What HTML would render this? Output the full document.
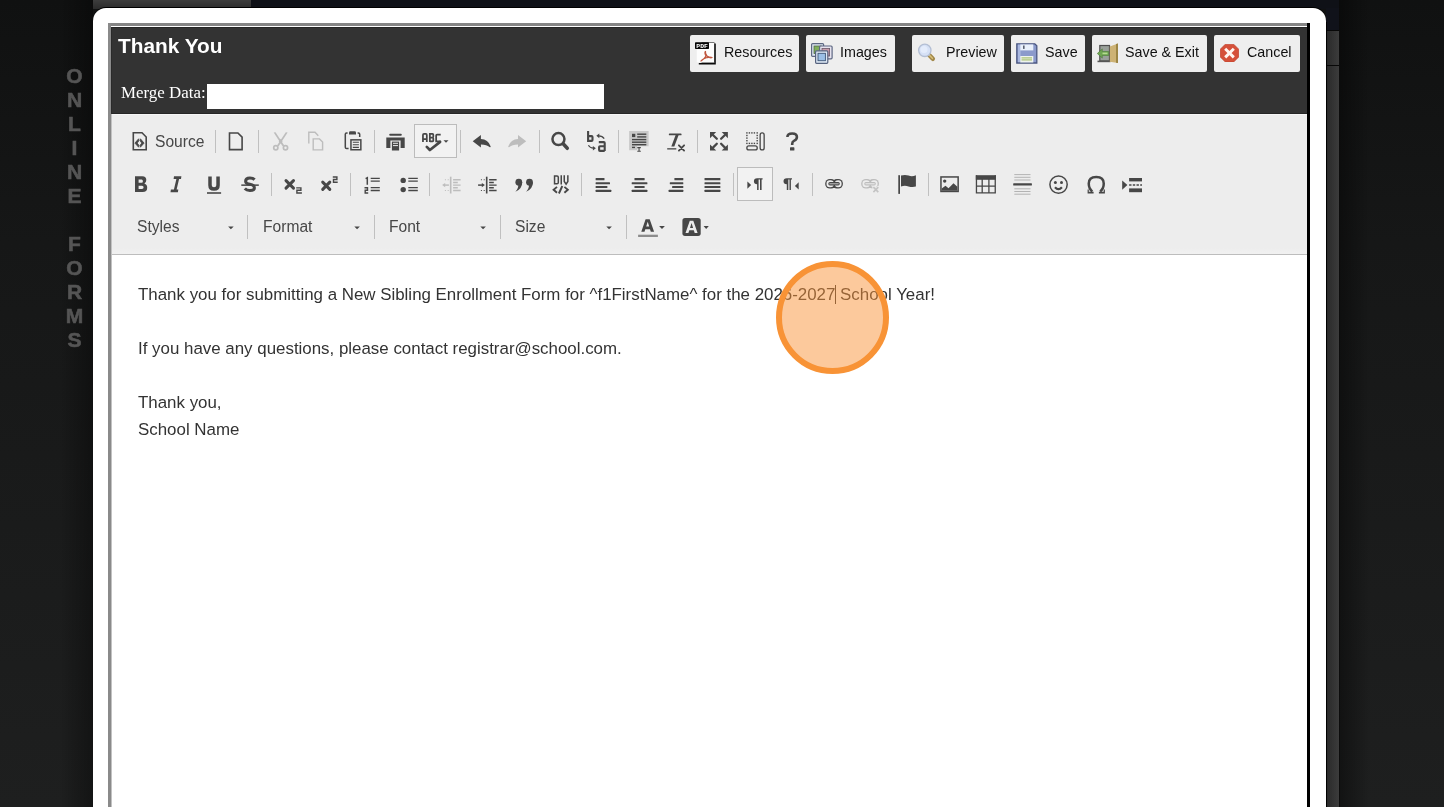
<!DOCTYPE html>
<html><head><meta charset="utf-8">
<style>
*{box-sizing:border-box}
html,body{margin:0;padding:0}
body{width:1444px;height:807px;overflow:hidden;position:relative;background:linear-gradient(180deg,#101111 0%,#161717 30%,#1e1f1f 100%);font-family:"Liberation Sans",sans-serif}
.abs{position:absolute}
#title,#merge,#body,#side,.lbl,.hb span,svg{will-change:transform}
#side{position:absolute;left:53.5px;top:63.5px;width:41px;text-align:center;color:#555;font:bold 21px/24px "Liberation Sans",sans-serif;-webkit-text-stroke:0.6px #555}
#topgray{left:93px;top:0;width:158px;height:9px;background:linear-gradient(180deg,#3d3d3d,#2b2b2b)}
#topnavy{left:251px;top:0;width:1088px;height:9px;background:#0f1117}
#rnavy{left:1326px;top:8px;width:13px;height:22px;background:#10121a}
#rstrip{left:1327px;top:30px;width:12px;height:777px;background:linear-gradient(90deg,#2a2a2a,#3c3c3c)}
#rline{left:1326px;top:22px;width:1px;height:785px;background:#000}
#lshade{left:60px;top:0;width:33px;height:807px;background:linear-gradient(90deg,rgba(0,0,0,0),rgba(0,0,0,0.35))}
#rshade{left:1339px;top:0;width:30px;height:807px;background:linear-gradient(90deg,rgba(0,0,0,0.4),rgba(0,0,0,0))}
#rh1{left:1327px;top:30px;width:12px;height:1.2px;background:#080808}
#rh2{left:1327px;top:64.5px;width:12px;height:1.3px;background:#080808}
#rblk{left:1338.5px;top:30px;width:1px;height:777px;background:#0c0c0c}
#modal{left:93px;top:8px;width:1233px;height:820px;background:#fff;border-radius:13px;box-shadow:0 -1px 0 #000}
#fl{left:107.7px;top:23px;width:3.3px;height:784px;background:#8a8a8a}
#fll{left:111px;top:114px;width:0.8px;height:693px;background:#c2c2c2}
#fdl{left:111px;top:27px;width:1px;height:87px;background:#2a2a2a}
#fdt{left:111px;top:27px;width:1196px;height:1px;background:#252525}
#ft{left:108px;top:23px;width:1202px;height:2.6px;background:#858585}
#fw{left:111px;top:25.6px;width:1196px;height:1.4px;background:#fff}
#fr{left:1307px;top:23px;width:3px;height:784px;background:#000}
#hdr{left:111px;top:27px;width:1196px;height:87px;background:#333}
#hdrline{left:111px;top:112.5px;width:1196px;height:1px;background:#262626}
#title{left:118px;top:31.8px;color:#fff;font:bold 20.8px/28px "Liberation Sans",sans-serif;white-space:nowrap}
#merge{left:121px;top:81px;color:#fff;font:16.9px/24px "Liberation Serif",serif;white-space:nowrap}
#mergein{left:207px;top:84px;width:397px;height:25px;background:#fff}
.hb{position:absolute;top:35px;height:37px;background:#eee;border-radius:2px;color:#111;font:14.3px/37px "Liberation Sans",sans-serif;white-space:nowrap}
.hb span{position:absolute;top:0}
.hb svg{position:absolute}
#tb{left:111px;top:113.5px;width:1196px;height:141px;background:#ededed;border-top:1px solid #f6f6f6}
#tbb{left:111px;top:254px;width:1196px;height:1px;background:#bdbdbd}
#tbg{left:111px;top:247.5px;width:1196px;height:6.5px;background:linear-gradient(180deg,#ededed,#f1f1f1)}
#ed{left:111px;top:255px;width:1196px;height:560px;background:#fff}
.sep{position:absolute;width:1px;background:#c0c0c0}
.lbl{position:absolute;color:#474747;font:15.6px/20px "Liberation Sans",sans-serif;white-space:nowrap}
.ic{position:absolute;overflow:visible}
.onbtn{position:absolute;background:#f2f2f2;border:1px solid #bcbcbc}
.arr{position:absolute;width:0;height:0;border-left:3px solid transparent;border-right:3px solid transparent;border-top:3px solid #474747}
#body{position:absolute;left:138px;top:281px;color:#333;font:16.9px/27.04px "Liberation Sans",sans-serif;white-space:nowrap}
#body p{margin:0}
#caret{left:835px;top:285px;width:1px;height:19px;background:#333}
#circ{left:776px;top:261px;width:113px;height:113px;border-radius:50%;border:6px solid #f89336;background:rgba(250,148,58,0.5)}
</style></head><body>
<div class="abs" id="lshade"></div><div class="abs" id="rshade"></div>
<div id="side">O<br>N<br>L<br>I<br>N<br>E<br><br>F<br>O<br>R<br>M<br>S</div>
<div class="abs" id="topgray"></div>
<div class="abs" id="topnavy"></div>
<div class="abs" id="rnavy"></div>
<div class="abs" id="rstrip"></div><div class="abs" id="rblk"></div><div class="abs" id="rh1"></div><div class="abs" id="rh2"></div>
<div class="abs" id="modal"></div>
<div class="abs" id="rline"></div>
<div class="abs" id="ft"></div>
<div class="abs" id="fl"></div>
<div class="abs" id="fw"></div>
<div class="abs" id="fr"></div>
<div class="abs" id="hdr"></div>
<div class="abs" id="hdrline"></div><div class="abs" id="fdt"></div><div class="abs" id="fdl"></div>
<div class="abs" id="title">Thank You</div>
<div class="abs" id="merge">Merge Data:</div>
<div class="abs" id="mergein"></div>
<!--HB-->
<div class="hb" style="left:690px;width:109px"><svg style="left:5px;top:7px" width="22" height="23" viewBox="0 0 22 23">
<path d="M6.5 0.5h13v20h-13z" fill="#000"/>
<path d="M1.8 1h17.5v19.3h-17.5z" fill="#fdfdfd"/>
<path d="M19.3 1.5h1.5v21h-17v-1.4h15.5z" fill="#0a0a0a"/>
<rect x="0" y="0.3" width="14" height="6.7" rx="0.7" fill="#050505"/>
<text x="1.3" y="5.6" font-family="Liberation Mono" font-weight="bold" font-size="6.2" fill="#fff" textLength="11.5" lengthAdjust="spacingAndGlyphs">PDF</text>
<path d="M10.5 9.5c-1 0.5 -0.5 2.5 0.5 4.5c-1 2 -3 4 -5 5c1 -1.5 3 -2.5 6 -3.5c2 -0.5 4 -0.5 5 0c-1 0.5 -3 0 -5 -1.5c-1 -1.5 -2 -3.5 -1.5 -4.5z" fill="none" stroke="#c0573f" stroke-width="1.3" stroke-linejoin="round"/>
</svg><span style="left:34px;top:-0.8px">Resources</span></div>
<div class="hb" style="left:806px;width:88.5px"><svg style="left:5px;top:8px" width="22" height="21" viewBox="0 0 22 21">
<rect x="0.6" y="0.6" width="12" height="12.8" rx="1" fill="#dfe7f0" stroke="#5d6782" stroke-width="1.2"/>
<rect x="3" y="3" width="7.2" height="7.5" fill="#7fae5a" stroke="#4f6a48" stroke-width="0.8"/>
<rect x="8.6" y="3" width="12.5" height="12.8" rx="1" fill="#e6e3ee" stroke="#5d6782" stroke-width="1.2"/>
<rect x="11" y="5.4" width="7.6" height="7.6" fill="#c89aaa" stroke="#6a5868" stroke-width="0.8"/>
<rect x="4.6" y="7.8" width="12.2" height="12.5" rx="1" fill="#dde8f5" stroke="#56627e" stroke-width="1.2"/>
<rect x="7" y="10.3" width="7.4" height="7.4" fill="#9bbfe6" stroke="#3f5676" stroke-width="0.9"/>
</svg><span style="left:34px;top:-0.8px">Images</span></div>
<div class="hb" style="left:912px;width:92px"><svg style="left:5px;top:8px" width="20" height="19" viewBox="0 0 20 19">
<path d="M12.2 12l3.6 3.8" stroke="#a08646" stroke-width="4.4" stroke-linecap="round"/>
<path d="M12.6 12.4l2.8 2.9" stroke="#d6be78" stroke-width="1.6" stroke-linecap="round"/>
<circle cx="7.8" cy="7.3" r="6.2" fill="#d6e1f6" stroke="#b4bfd4" stroke-width="1.3"/>
<circle cx="7" cy="6.5" r="3.5" fill="#e4ecfb"/>
</svg><span style="left:33.5px;top:-0.8px">Preview</span></div>
<div class="hb" style="left:1011px;width:74px"><svg style="left:5px;top:8px" width="22" height="21" viewBox="0 0 22 21">
<path d="M0.8 0.8h18l2 2v17.2h-20z" fill="#8b9acb" stroke="#4b5781" stroke-width="1.3"/>
<rect x="2" y="1.6" width="2.6" height="17.6" fill="#aab8e0"/>
<rect x="4.3" y="1.4" width="13" height="6" fill="#e9f0fb"/>
<rect x="7" y="2.5" width="1.6" height="3.4" fill="#5a6070"/>
<rect x="4.3" y="13" width="13" height="6.5" fill="#eef3ee"/>
<rect x="5.5" y="14.3" width="10.5" height="1.2" fill="#a7c070"/>
<rect x="5.5" y="16.3" width="10.5" height="1.2" fill="#a7c070"/>
</svg><span style="left:33.7px;top:-0.8px">Save</span></div>
<div class="hb" style="left:1092px;width:115px"><svg style="left:5px;top:8px" width="22" height="21" viewBox="0 0 22 21">
<rect x="2.8" y="2.5" width="9.7" height="15.5" fill="#9aa09a" stroke="#4e4e4e" stroke-width="1.2"/>
<rect x="0.5" y="17.6" width="13" height="1.6" fill="#555"/>
<path d="M12.8 3.4l8.2-3v19.6l-8.2 -1.2z" fill="#cdb274"/>
<path d="M19 1l2 -0.6v19.6l-2-0.3z" fill="#9c8544"/>
<path d="M0.3 10.5l5-4.6v2.6h6.4v4h-6.4v2.6z" fill="#6fa552" stroke="#4c7d38" stroke-width="0.6"/>
<path d="M5.5 9.6h5v1.6h-5z" fill="#b3dc8e"/>
</svg><span style="left:33.3px;top:-0.8px">Save &amp; Exit</span></div>
<div class="hb" style="left:1214px;width:86px"><svg style="left:6px;top:9px" width="19" height="18" viewBox="0 0 19 18">
<path d="M5.3 0.2h8.4l5.1 5.1v7.6l-5.1 5.1h-8.4l-5.1-5.1v-7.6z" fill="#d5503a" stroke="#b83e2a" stroke-width="0.6"/>
<path d="M5.2 4.8l8.6 8.6M13.8 4.8l-8.6 8.6" stroke="#fff4f0" stroke-width="2.9"/>
</svg><span style="left:33.3px;top:-0.8px">Cancel</span></div>
<!--/HB-->
<div class="abs" id="tb"></div>
<div class="abs" id="tbg"></div><div class="abs" id="tbb"></div>
<div class="abs" id="ed"></div><div class="abs" id="fll"></div>
<!--TB-->
<div class="sep" style="left:215.0px;top:130px;height:23px"></div>
<div class="sep" style="left:258.0px;top:130px;height:23px"></div>
<div class="sep" style="left:373.5px;top:130px;height:23px"></div>
<div class="sep" style="left:460.0px;top:130px;height:23px"></div>
<div class="sep" style="left:538.5px;top:130px;height:23px"></div>
<div class="sep" style="left:618.0px;top:130px;height:23px"></div>
<div class="sep" style="left:697.0px;top:130px;height:23px"></div>
<div class="sep" style="left:270.8px;top:172.5px;height:23.3px"></div>
<div class="sep" style="left:349.9px;top:172.5px;height:23.3px"></div>
<div class="sep" style="left:429.1px;top:172.5px;height:23.3px"></div>
<div class="sep" style="left:581.0px;top:172.5px;height:23.3px"></div>
<div class="sep" style="left:732.8px;top:172.5px;height:23.3px"></div>
<div class="sep" style="left:812.1px;top:172.5px;height:23.3px"></div>
<div class="sep" style="left:927.9px;top:172.5px;height:23.3px"></div>
<div class="sep" style="left:246.9px;top:215.3px;height:23.4px"></div>
<div class="sep" style="left:374.1px;top:215.3px;height:23.4px"></div>
<div class="sep" style="left:500.4px;top:215.3px;height:23.4px"></div>
<div class="sep" style="left:625.9px;top:215.3px;height:23.4px"></div>
<div class="onbtn" style="left:414px;top:124px;width:43px;height:34px"></div>
<div class="onbtn" style="left:737px;top:167.3px;width:36px;height:33.3px"></div>
<div class="lbl" style="left:155px;top:131.5px">Source</div>
<div class="lbl" style="left:136.8px;top:217.3px">Styles</div>
<div class="lbl" style="left:262.8px;top:217.3px">Format</div>
<div class="lbl" style="left:388.8px;top:217.3px">Font</div>
<div class="lbl" style="left:514.8px;top:217.3px">Size</div>
<svg class="abs" style="left:0;top:0" width="1444" height="807" viewBox="0 0 1444 807"><path d="M133.3 132.8H142L146.2 137V149.79999999999998H133.3Z" fill="none" stroke="#474747" stroke-width="1.6" stroke-linejoin="miter"/><path d="M138.6 138.8L134.9 143.1L138.6 147.2L138.9 145.3L137.2 143.1L138.9 140.8Z" fill="#474747" stroke="#474747" stroke-width="0.8" stroke-linejoin="round"/><path d="M140.4 138.8L144.1 143.1L140.4 147.2L140.1 145.3L141.8 143.1L140.1 140.8Z" fill="#474747" stroke="#474747" stroke-width="0.8" stroke-linejoin="round"/><path d="M229.5 133.0H237.9L242.1 137.2V149.6H229.5Z" fill="none" stroke="#474747" stroke-width="1.6" stroke-linejoin="miter"/><g fill="#bdbdbd"><path d="M273.7 132.6L275.5 132.3L284.3 145.4L282.6 146.3Z"/><path d="M287.6 132.6L285.8 132.3L277 145.4L278.7 146.3Z"/><path d="M280.65 138.8L282.6 141.4L280.65 143.8L278.7 141.4Z"/></g><g fill="none" stroke="#bdbdbd"><circle cx="275.8" cy="147.8" r="2.1" stroke-width="1.7"/><circle cx="285.5" cy="147.8" r="2.1" stroke-width="1.7"/></g><path d="M308.8 143.6V132.2H315L318.3 135.8" fill="none" stroke="#bdbdbd" stroke-width="1.4"/><path d="M313.2 138.89999999999998H319.5L322.6 142.0V149.9H313.2Z" fill="none" stroke="#bdbdbd" stroke-width="1.4" stroke-linejoin="miter"/><path d="M347.6 132.9H346.6Q345.3 132.9 345.3 134.2V147.2Q345.3 148.5 346.6 148.5H348.6" fill="none" stroke="#474747" stroke-width="1.5"/><path d="M357.6 132.9H358.4Q359.7 132.9 359.7 134.2V137" fill="none" stroke="#474747" stroke-width="1.5"/><path d="M349 134.6V132.6Q349 131.2 350.4 131.2H354.6Q356 131.2 356 132.6V134.6Z" fill="#474747"/><rect x="350.95" y="139.85" width="9.9" height="9.9" fill="none" stroke="#474747" stroke-width="1.5"/><path d="M352.8 142.2H358.9M352.8 144.8H358.9M352.8 147.4H358.9" stroke="#474747" stroke-width="1.1"/><rect x="389.2" y="133.8" width="12.6" height="2" rx="1" fill="#474747"/><path d="M386.3 137.5H404.7V147.9H400.6V140.5H390.4V147.9H386.3Z" fill="#474747"/><path d="M391.9 141.6H399.1V150.5H391.9Z" fill="#474747"/><path d="M393 143.3H398M393 145.6H398" stroke="#ebebeb" stroke-width="1"/><g fill="none" stroke="#474747" stroke-width="1.75"><path d="M422.95 142V135Q422.95 133.9 424 133.9H425.9Q426.8 133.9 426.8 135V142M422.95 139H426.8"/><path d="M429.85 142V133.9H432.6Q433.3 133.9 433.3 134.8V136.6Q433.3 137.5 432.6 137.5H429.85M432.6 137.5Q433.3 137.5 433.3 138.4V140.4Q433.3 141.25 432.6 141.25H429.85"/><path d="M440.7 134.65H437Q436.15 134.65 436.15 135.5V141.25H440.7"/></g><path d="M426.8 146.9L429.9 150L440.1 141.9" fill="none" stroke="#474747" stroke-width="2.7" stroke-linecap="round" stroke-linejoin="round"/><path d="M443.5 140.3H448.5L446 142.8Z" fill="#474747"/><path d="M472.7 141.3L480.9 134.9V139Q488 139 490.7 146.5Q490.6 147.7 489.5 147.1Q486.6 144.3 480.9 144.4V147.6Z" fill="#474747"/><g transform="translate(998.9000000000001,0) scale(-1,1)"><path d="M472.7 141.3L480.9 134.9V139Q488 139 490.7 146.5Q490.6 147.7 489.5 147.1Q486.6 144.3 480.9 144.4V147.6Z" fill="#bdbdbd"/></g><circle cx="558.45" cy="139.1" r="6" fill="none" stroke="#474747" stroke-width="2.5"/><path d="M563.4 144L567.3 148.3" stroke="#474747" stroke-width="3.5" stroke-linecap="round"/><path d="M588.1 131V140.9H591.5Q592.5 140.9 592.5 139.9V137.1Q592.5 136.1 591.5 136.1H588.1" fill="none" stroke="#474747" stroke-width="2.1"/><path d="M598.8 142.1H603.8Q604.7 142.1 604.7 143V151M604.7 146.2H600Q599.1 146.2 599.1 147.1V150Q599.1 150.9 600 150.9H604.7" fill="none" stroke="#474747" stroke-width="2.1"/><path d="M596.3 135.8L599.3 133.5V138.2Z" fill="#474747"/><path d="M598.8 135.8Q602.5 135.9 604.2 138.6" fill="none" stroke="#474747" stroke-width="1.2"/><path d="M595.9 148.2L592.9 145.9V150.5Z" fill="#474747"/><path d="M593.5 148.2Q590 148.1 588.4 145.3" fill="none" stroke="#474747" stroke-width="1.2"/><path d="M629.1 131.1H648.6V146.3H637.2V150.3H629.1Z" fill="#c9c9c9"/><rect x="632" y="133.8" width="3.3" height="3.3" fill="#474747"/><g fill="#474747"><rect x="637.2" y="133.5" width="9.1" height="1.4"/><rect x="637.2" y="136.2" width="9.1" height="1.4"/><rect x="632" y="138.9" width="14.3" height="1.4"/><rect x="632" y="141.5" width="14.3" height="1.4"/><rect x="632" y="144" width="14.3" height="1.4"/><rect x="632" y="146.7" width="3" height="1.4"/></g><path d="M637.3 147.6H640.8M639.05 147.6V151.2M637.3 151.2H640.8" stroke="#474747" stroke-width="1.1"/><rect x="668.8" y="133.5" width="12.8" height="1.8" rx="0.9" fill="#474747"/><path d="M675.6 135L678.6 135L674.3 146.6L671.3 146.6Z" fill="#474747"/><rect x="667.2" y="148.2" width="9.1" height="1.3" fill="#474747"/><path d="M678.9 145.3L684.1 150.6M684.1 145.3L678.9 150.6" stroke="#474747" stroke-width="1.8" stroke-linecap="round"/><path d="M710 132L716.2 132L710 138.2Z" fill="#474747"/><path d="M713.2 135.2L716.8 138.8" stroke="#474747" stroke-width="2.3" stroke-linecap="round"/><path d="M727.9 132L721.6999999999999 132L727.9 138.2Z" fill="#474747"/><path d="M724.6999999999999 135.2L721.1 138.8" stroke="#474747" stroke-width="2.3" stroke-linecap="round"/><path d="M710 150.6L716.2 150.6L710 144.4Z" fill="#474747"/><path d="M713.2 147.4L716.8 143.79999999999998" stroke="#474747" stroke-width="2.3" stroke-linecap="round"/><path d="M727.9 150.6L721.6999999999999 150.6L727.9 144.4Z" fill="#474747"/><path d="M724.6999999999999 147.4L721.1 143.79999999999998" stroke="#474747" stroke-width="2.3" stroke-linecap="round"/><g fill="#474747"><rect x="746.2" y="132.2" width="1.4" height="1.4"/><rect x="746.2" y="142.7" width="1.4" height="1.4"/><rect x="748.7" y="132.2" width="1.4" height="1.4"/><rect x="748.7" y="142.7" width="1.4" height="1.4"/><rect x="751.2" y="132.2" width="1.4" height="1.4"/><rect x="751.2" y="142.7" width="1.4" height="1.4"/><rect x="753.7" y="132.2" width="1.4" height="1.4"/><rect x="753.7" y="142.7" width="1.4" height="1.4"/><rect x="756.5" y="132.2" width="1.4" height="1.4"/><rect x="756.5" y="142.7" width="1.4" height="1.4"/><rect x="746.2" y="134.8" width="1.4" height="1.4"/><rect x="756.5" y="134.8" width="1.4" height="1.4"/><rect x="746.2" y="137.4" width="1.4" height="1.4"/><rect x="756.5" y="137.4" width="1.4" height="1.4"/><rect x="746.2" y="140.0" width="1.4" height="1.4"/><rect x="756.5" y="140.0" width="1.4" height="1.4"/></g><rect x="746.85" y="145.95" width="10.4" height="4" rx="2" fill="none" stroke="#474747" stroke-width="1.3"/><rect x="760.15" y="132.95" width="4" height="17" rx="2" fill="none" stroke="#474747" stroke-width="1.3"/><path d="M787.4 137Q787.4 133.5 792.2 133.5Q796.9 133.5 796.9 137Q796.9 139.4 794.3 140.6Q792.2 141.6 792.2 143.8V145" fill="none" stroke="#474747" stroke-width="2.6"/><rect x="790" y="147.3" width="4.4" height="3.3" rx="0.6" fill="#474747"/><path d="M135 176.3H142.3Q146.3 176.3 146.3 180.1Q146.3 182.6 144.4 183.6Q147.2 184.6 147.2 187.7Q147.2 192.1 142.6 192.1H135Z M138.6 179.6V182.7H141.6Q142.9 182.7 142.9 181.15Q142.9 179.6 141.6 179.6Z M138.6 185.7V189H142Q143.6 189 143.6 187.35Q143.6 185.7 142 185.7Z" fill="#474747" fill-rule="evenodd"/><path d="M174 176.3H181.4L181 178.9H173.6Z M170.9 189.5H178.3L177.9 192.2H170.5Z M176.5 178.5H179.2L176.5 190H173.8Z" fill="#474747"/><path d="M210 176.6V185.2Q210 189.1 214 189.1Q218.05 189.1 218.05 185.2V176.6" fill="none" stroke="#474747" stroke-width="3.5"/><rect x="207" y="192.1" width="14.1" height="1.8" fill="#5a5a5a"/><path d="M254.6 179.6Q253 177.9 249.9 177.9Q245.6 177.9 245.6 181.2Q245.6 183.6 249.9 184.3Q254.4 185 254.4 188Q254.4 190.6 249.9 190.6Q246.6 190.6 244.8 188.6" fill="none" stroke="#474747" stroke-width="3"/><rect x="241.3" y="184.4" width="17.5" height="1.5" fill="#474747"/><path d="M286 180.6L293.5 188.1M293.5 180.6L286 188.1" stroke="#474747" stroke-width="3" stroke-linecap="round"/><path d="M296.2 187.9H300.9V190.3H296.9V193H301.9" fill="none" stroke="#474747" stroke-width="1.4"/><path d="M322.7 182.1L329.8 189.4M329.8 182.1L322.7 189.4" stroke="#474747" stroke-width="3" stroke-linecap="round"/><path d="M332.8 177H336.9V179.5H333.5V182.3H337.7" fill="none" stroke="#474747" stroke-width="1.4"/><path d="M365.6 178.6L367.3 177.8V184.7" fill="none" stroke="#474747" stroke-width="1.5"/><path d="M364.5 187.7H367.5V190.2H365.2V193H368.2" fill="none" stroke="#474747" stroke-width="1.4"/><path d="M370.7 178.4H379.8M370.7 181.2H379.8M370.7 187.7H379.8M370.7 190.5H379.8" stroke="#474747" stroke-width="1.3"/><circle cx="403.2" cy="180.4" r="2.7" fill="#474747"/><circle cx="403.2" cy="189.6" r="2.7" fill="#474747"/><path d="M408.3 178.4H417.8M408.3 181.2H417.8M408.3 187.7H417.8M408.3 190.5H417.8" stroke="#474747" stroke-width="1.3"/><rect x="485.9" y="176.7" width="1.6" height="16.8" fill="#474747"/><path d="M489.1 179.8H496.6M489.1 182.5H493.8M489.1 185.1H496.6M489.1 187.8H493.8M489.1 190.5H496.6" stroke="#474747" stroke-width="1.4"/><path d="M478.1 185.1H482.3" stroke="#474747" stroke-width="1.5"/><path d="M481.8 182.9L484.9 185.1L481.8 187.3Z" fill="#474747"/><path d="M480.9 179.3h1v1h-1zM483.7 179.3h1v1h-1zM480.9 190h1v1h-1zM483.7 190h1v1h-1z" fill="#474747"/><g transform="translate(-36,0)"><rect x="485.9" y="176.7" width="1.6" height="16.8" fill="#bdbdbd"/><path d="M489.1 179.8H496.6M489.1 182.5H493.8M489.1 185.1H496.6M489.1 187.8H493.8M489.1 190.5H496.6" stroke="#bdbdbd" stroke-width="1.4"/><path d="M480.8 185.1H484.9" stroke="#bdbdbd" stroke-width="1.5"/><path d="M481.2 182.9L478.1 185.1L481.2 187.3Z" fill="#bdbdbd"/><path d="M480.9 179.3h1v1h-1zM483.7 179.3h1v1h-1zM480.9 190h1v1h-1zM483.7 190h1v1h-1z" fill="#bdbdbd"/></g><circle cx="518.8" cy="182.2" r="3.4" fill="#474747"/><path d="M522.1999999999999 182.2Q522.4 188.6 515.4 191.8Q518.5999999999999 188.4 518.1999999999999 184.5Z" fill="#474747"/><circle cx="529.5" cy="182.2" r="3.4" fill="#474747"/><path d="M532.9 182.2Q533.1 188.6 526.1 191.8Q529.3 188.4 528.9 184.5Z" fill="#474747"/><g fill="none" stroke="#474747" stroke-width="1.5"><path d="M554.55 175.2V184.5M554 175.95H557Q558.3 175.95 558.3 177.3V182.4Q558.3 183.75 557 183.75H554"/><path d="M561.25 175.2V184.5"/><path d="M564.25 175.2V181.5L566.1 184.2L567.85 181.5V175.2"/></g><g fill="none" stroke="#474747" stroke-width="1.9" stroke-linejoin="miter"><path d="M557 186.9L553.6 189.8L557 192.7"/><path d="M562.3 186L558.9 193.5"/><path d="M564.4 186.9L567.8 189.8L564.4 192.7"/></g><g fill="#474747"><rect x="595.60" y="178.05" width="8.90" height="2.1" rx="0.5"/><rect x="595.60" y="182.15" width="14.40" height="2.1" rx="0.5"/><rect x="595.60" y="185.95" width="11.80" height="2.1" rx="0.5"/><rect x="595.60" y="189.85" width="15.70" height="2.1" rx="0.5"/></g><g fill="#474747"><rect x="634.45" y="178.05" width="10.20" height="2.1" rx="0.5"/><rect x="631.70" y="182.15" width="15.70" height="2.1" rx="0.5"/><rect x="634.45" y="185.95" width="10.20" height="2.1" rx="0.5"/><rect x="631.70" y="189.85" width="15.70" height="2.1" rx="0.5"/></g><g fill="#474747"><rect x="674.40" y="178.05" width="8.90" height="2.1" rx="0.5"/><rect x="669.80" y="182.15" width="13.50" height="2.1" rx="0.5"/><rect x="672.10" y="185.95" width="11.20" height="2.1" rx="0.5"/><rect x="668.60" y="189.85" width="14.70" height="2.1" rx="0.5"/></g><g fill="#474747"><rect x="704.50" y="178.05" width="15.90" height="2.1" rx="0.5"/><rect x="704.50" y="182.15" width="15.90" height="2.1" rx="0.5"/><rect x="704.50" y="185.95" width="15.90" height="2.1" rx="0.5"/><rect x="704.50" y="189.85" width="15.90" height="2.1" rx="0.5"/></g><path d="M747.4 181.4L751.1 185.05L747.4 188.7Z" fill="#474747"/><path d="M757.1 178.2H762.6V179.6H761.6V190H760V179.6H758.6V190H757.1V184.3Q753.9 184.2 753.9 181.2Q753.9 178.2 757.1 178.2Z" fill="#474747"/><path d="M798.7 182.3L794.9 185.95L798.7 189.6Z" fill="#474747"/><path d="M786.8 178.2H792V179.6H790.9V190H789.5V179.6H788.3V190H786.8V184.3Q783.5 184.2 783.5 181.2Q783.5 178.2 786.8 178.2Z" fill="#474747"/><rect x="825.2" y="179" width="10.6" height="9.5" rx="4.6" fill="#474747"/><rect x="832.3000000000001" y="179" width="10.6" height="9.5" rx="4.6" fill="#474747"/><rect x="826.5" y="180.3" width="7.3" height="6.9" rx="3.3" fill="#ededed"/><rect x="834.8000000000001" y="180.3" width="6.8" height="6.9" rx="3.3" fill="#ededed"/><rect x="828.3000000000001" y="182.1" width="11.5" height="3.3" rx="1.6" fill="#474747"/><rect x="829.4000000000001" y="183.1" width="9.3" height="1.3" fill="#a8a8a8"/><rect x="861.2" y="179" width="10.6" height="9.5" rx="4.6" fill="#bdbdbd"/><rect x="868.3000000000001" y="179" width="10.6" height="9.5" rx="4.6" fill="#bdbdbd"/><rect x="862.5" y="180.3" width="7.3" height="6.9" rx="3.3" fill="#ededed"/><rect x="870.8000000000001" y="180.3" width="6.8" height="6.9" rx="3.3" fill="#ededed"/><rect x="864.3000000000001" y="182.1" width="11.5" height="3.3" rx="1.6" fill="#bdbdbd"/><rect x="865.4000000000001" y="183.1" width="9.3" height="1.3" fill="#e4e4e4"/><path d="M873 186.8L878.6 192.4M878.6 186.8L873 192.4" stroke="#ededed" stroke-width="3.2"/><path d="M873.4 187.2L878.3 192.1M878.3 187.2L873.4 192.1" stroke="#c4c4c4" stroke-width="1.7"/><rect x="898.3" y="175.2" width="1.7" height="18.7" fill="#474747"/><path d="M901 175.6Q905 174.3 908.5 175.6Q912.3 176.9 915.9 175.2V186.6Q912.3 187.6 908.5 186.4Q905 185.2 901 186.4Z" fill="#474747"/><rect x="940.95" y="176.95" width="17.2" height="14.5" fill="none" stroke="#474747" stroke-width="1.5"/><circle cx="944.7" cy="181.1" r="1.7" fill="#474747"/><path d="M941.7 190.7V188.5L945.5 185.8L948.5 188.3L953.5 183.3L957.4 186.8V190.7Z" fill="#474747"/><rect x="975.8" y="175.2" width="20.1" height="4.6" fill="#474747"/><path d="M976.45 175.2V193.5M982.2 179V193M988.9 179V193M995.25 175.2V193.5M976 186.2H995.7M976 192.85H995.7" stroke="#474747" stroke-width="1.3"/><path d="M1014.3 174.6H1030.5M1014.3 177.3H1030.5M1014.3 180H1030.5M1014.3 188.8H1030.5M1014.3 191.5H1030.5M1014.3 194.2H1030.5" stroke="#b3b3b3" stroke-width="1"/><rect x="1013.2" y="183.2" width="18.7" height="2.4" rx="0.6" fill="#474747"/><circle cx="1058.55" cy="184.55" r="8.65" fill="none" stroke="#474747" stroke-width="1.5"/><circle cx="1055.4" cy="182.4" r="1.5" fill="#474747"/><circle cx="1061.5" cy="182.4" r="1.5" fill="#474747"/><path d="M1055 187.2Q1058.4 191.2 1061.9 187.2" fill="none" stroke="#474747" stroke-width="2.2"/><path d="M1092.3 191.6Q1088.75 188.6 1088.75 183.6Q1088.75 177 1096.25 177Q1103.75 177 1103.75 183.6Q1103.75 188.6 1100.2 191.6" fill="none" stroke="#474747" stroke-width="2.5"/><path d="M1087.6 191.7H1093.6V193.5H1087.6Z M1098.9 191.7H1104.9V193.5H1098.9Z M1087.6 189.6H1088.8V193.5H1087.6Z M1103.7 189.6H1104.9V193.5H1103.7Z" fill="#474747"/><path d="M1122.2 180.4L1127.4 185.05L1122.2 189.7Z" fill="#474747"/><rect x="1129.1" y="178" width="12.9" height="3.4" fill="#474747"/><rect x="1129.1" y="188.4" width="12.9" height="3.8" fill="#474747"/><path d="M1129.1 185H1142" stroke="#474747" stroke-width="1.3" stroke-dasharray="2.4 1.3"/><path d="M228.1 226.5H233.7L230.9 229.3Z" fill="#474747"/><path d="M354.3 226.5H359.90000000000003L357.1 229.3Z" fill="#474747"/><path d="M480.3 226.5H485.90000000000003L483.1 229.3Z" fill="#474747"/><path d="M606.3 226.5H611.9L609.0999999999999 229.3Z" fill="#474747"/><path d="M645.6 219.3H649.7L654.1 231.8H650.8L650 229.2H645.3L644.5 231.8H641.3Z M646.2 226.5H649.2L647.7 221.8Z" fill="#474747" fill-rule="evenodd"/><rect x="638.1" y="234.7" width="19.8" height="2.3" fill="#8c8c8c"/><path d="M659.1 226H664.9L662 228.9Z" fill="#474747"/><rect x="682.4" y="218.1" width="18.3" height="17.8" rx="2.6" fill="#474747"/><path d="M689.8 220.7H693.3L697.6 233H694.7L693.8 230.3H689.3L688.4 233H685.5Z M690 227.9H693.1L691.55 223Z" fill="#ececec" fill-rule="evenodd"/><path d="M703.6 226H708.8L706.2 228.9Z" fill="#474747"/></svg>
<!--/TB-->
<div id="body"><p>Thank you for submitting a New Sibling Enrollment Form for ^f1FirstName^ for the 2026-2027 School Year!</p><p>&nbsp;</p><p>If you have any questions, please contact registrar@school.com.</p><p>&nbsp;</p><p>Thank you,</p><p>School Name</p></div>
<div class="abs" id="caret"></div>
<div class="abs" id="circ"></div>
</body></html>
